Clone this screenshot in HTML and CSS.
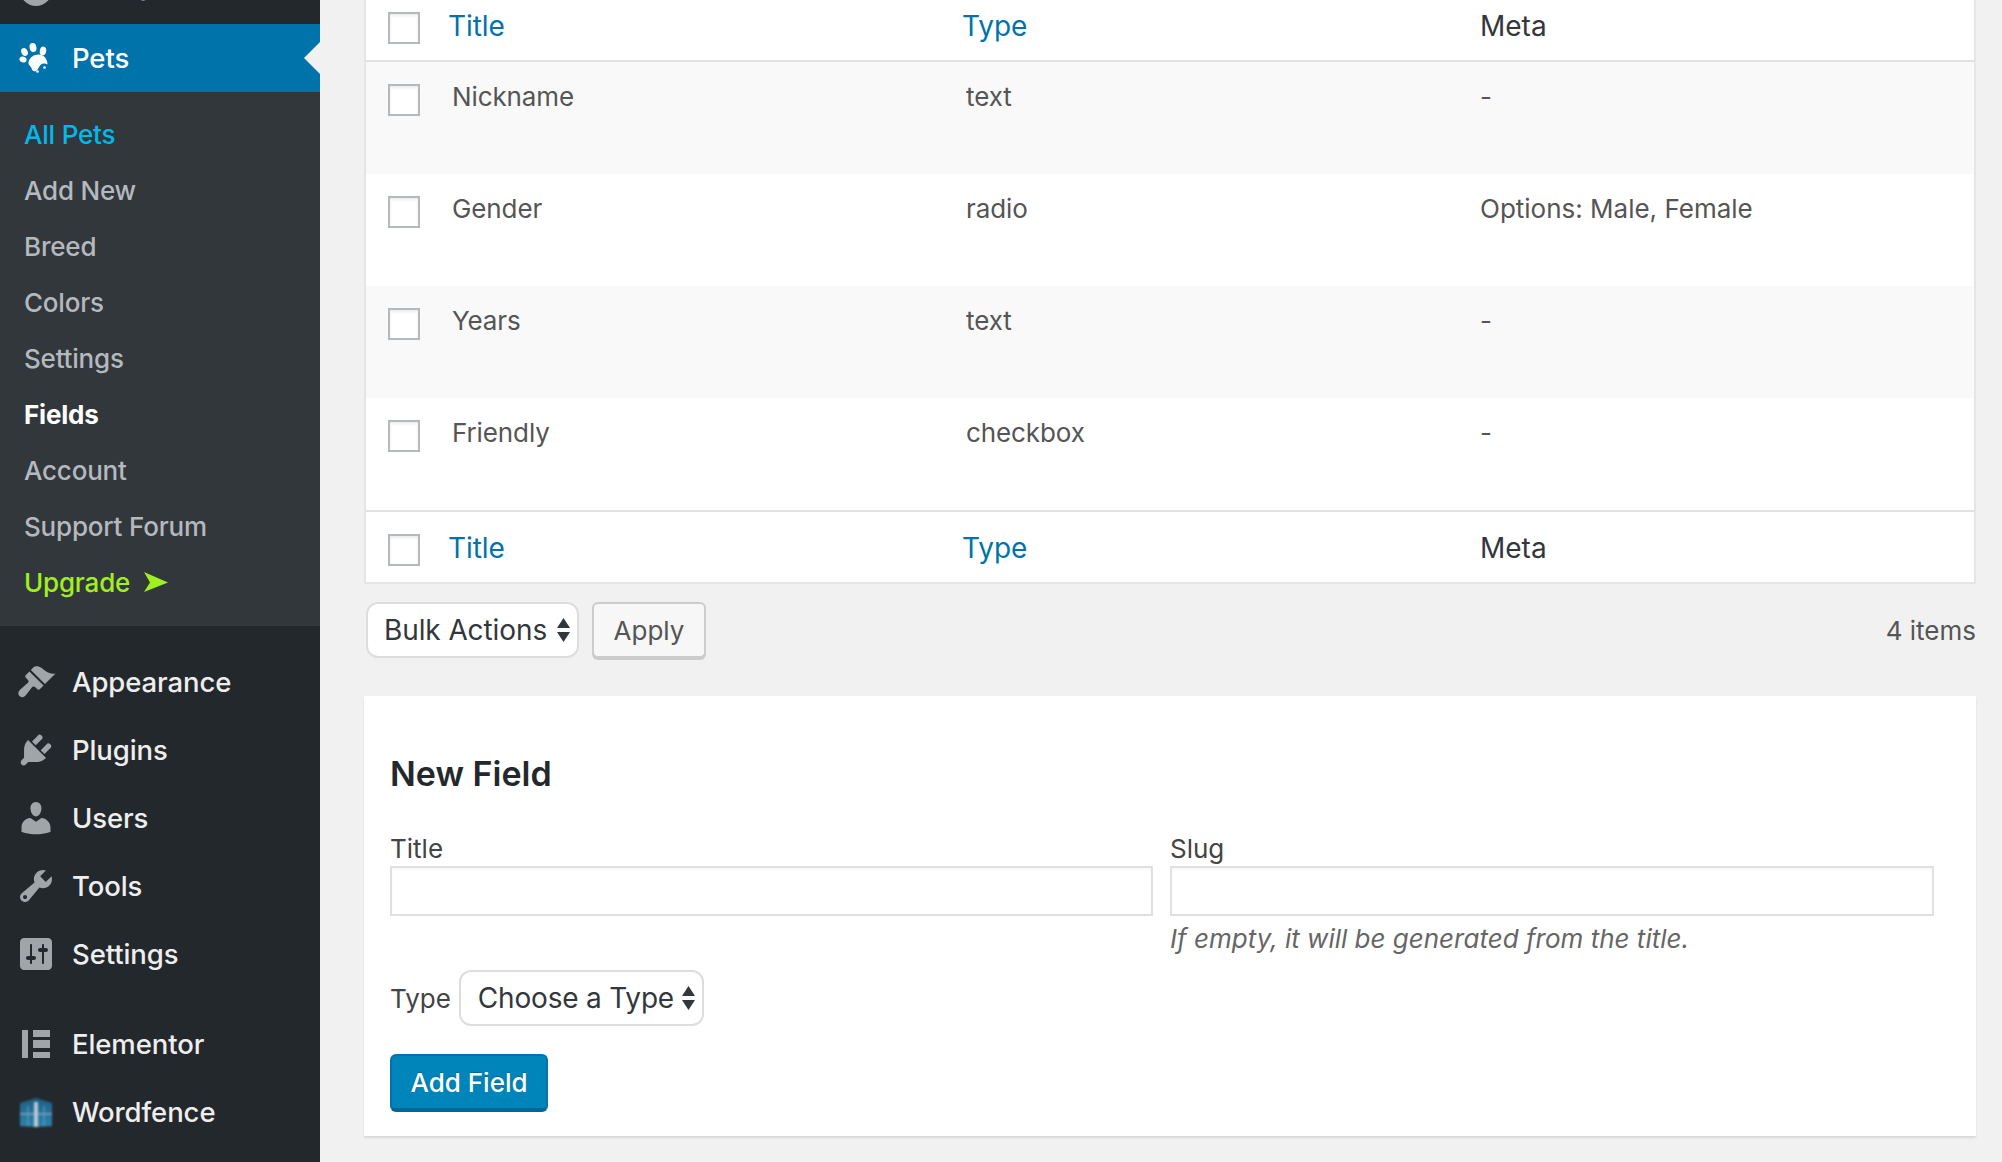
FILE: index.html
```html
<!DOCTYPE html>
<html lang="en">
<head>
<meta charset="utf-8">
<title>Pets - Fields</title>
<link rel="stylesheet" href="styles.css">
</head>
<body>
<aside class="sidebar">
  <nav class="menu">
    <a class="item cut"><svg class="ico" viewBox="0 0 20 20"><circle cx="10" cy="10" r="8"/></svg><span>Media</span></a>
    <a class="item current">
      <svg class="ico" viewBox="0 0 40 40"><ellipse cx="8.500" cy="14" rx="3.200" ry="4" transform="rotate(-25 8.500 14)"/><ellipse cx="17" cy="9.500" rx="3.400" ry="4.500" transform="rotate(-10 17 9.500)"/><ellipse cx="27" cy="13" rx="3.200" ry="4.400" transform="rotate(10 27 13)"/><ellipse cx="7" cy="21.500" rx="3.600" ry="2.900" transform="rotate(20 7 21.500)"/><path d="M12.500 24c1-4 5-7.500 10-7.500 5 0 9 4 9 10-2.500-1.500-5.500-1-7 .5-1.500 1.500-2 4-4.500 6-3 .8-4-1-4.500-3-.5-2-3.500-2.500-3-6z"/><circle cx="21.500" cy="33.500" r="1.300"/><circle cx="28.500" cy="29.500" r="1.300"/></svg>
      <span>Pets</span>
    </a>
    <ul class="sub">
      <li class="sub-item active">All Pets</li>
      <li class="sub-item">Add New</li>
      <li class="sub-item">Breed</li>
      <li class="sub-item">Colors</li>
      <li class="sub-item">Settings</li>
      <li class="sub-item strong">Fields</li>
      <li class="sub-item">Account</li>
      <li class="sub-item">Support Forum</li>
      <li class="sub-item upgrade">Upgrade <svg class="arrow" viewBox="0 0 24 20"><path d="M0 0l24 10.500L0 20l6-9.500z"/></svg></li>
    </ul>
    <a class="item"><svg class="ico" viewBox="0 0 20 20"><path d="M14.480 11.060L7.410 3.990l1.500-1.500c.5-.56 2.300-.47 3.510.32 1.210.8 1.430 1.280 2.910 2.100 1.180.64 2.450 1.260 4.450.85zm-.71.71L6.700 4.700 4.930 6.470c-.39.39-.39 1.020 0 1.410l1.060 1.060c.39.39.39 1.030 0 1.420L2 13.900c-1.100 1.100-1.100 2.300-.3 3.100.8.8 2.100.8 3.100-.3l3.310-4.220c.39-.39 1.030-.39 1.420 0l1.060 1.060c.39.39 1.020.39 1.410 0z"/></svg><span>Appearance</span></a>
    <a class="item"><svg class="ico" viewBox="0 0 20 20"><path d="M13.110 4.360L9.870 7.600 8 5.730l3.240-3.240c.35-.34 1.050-.2 1.560.32.52.51.66 1.210.31 1.550zm-8 1.770l.91-1.120 9.010 9.010-1.190.84c-.71.71-2.630 1.160-3.820 1.160H6.140L4.900 17.260c-.59.59-1.540.59-2.120 0-.59-.58-.59-1.530 0-2.120l1.240-1.240v-3.880c0-1.130.4-3.190 1.090-3.890zm7.260 3.970l3.240-3.240c.34-.35 1.040-.21 1.550.31.52.51.66 1.210.31 1.550l-3.240 3.250z"/></svg><span>Plugins</span></a>
    <a class="item"><svg class="ico" viewBox="0 0 20 20"><path d="M10 9.250c-2.270 0-2.730-3.440-2.730-3.440C7 4.020 7.820 2 9.970 2c2.160 0 2.980 2.020 2.710 3.810 0 0-.41 3.440-2.680 3.440zm0 2.570L12.720 10c2.390 0 4.520 2.330 4.520 4.530v2.490s-3.650 1.130-7.240 1.130c-3.650 0-7.240-1.130-7.240-1.130v-2.490c0-2.250 1.940-4.500 4.470-4.500z"/></svg><span>Users</span></a>
    <a class="item"><svg class="ico" viewBox="0 0 20 20"><path d="M16.680 9.770c-1.340 1.340-3.300 1.670-4.950.99l-5.410 6.520c-.99.99-2.590.99-3.580 0s-.99-2.590 0-3.570l6.520-5.420c-.68-1.650-.35-3.610.99-4.950 1.280-1.280 3.120-1.620 4.720-1.060l-2.890 2.890 2.820 2.820 2.860-2.870c.53 1.580.18 3.390-1.080 4.650zM3.810 16.210c.4.39 1.040.39 1.430 0 .4-.4.4-1.040 0-1.430-.39-.4-1.030-.4-1.430 0-.39.39-.39 1.030 0 1.430z"/></svg><span>Tools</span></a>
    <a class="item"><svg class="ico" viewBox="0 0 20 20"><path d="M18 16V4c0-1.100-.9-2-2-2H4c-1.100 0-2 .9-2 2v12c0 1.100.9 2 2 2h12c1.100 0 2-.9 2-2zM8 11h1c.55 0 1 .45 1 1s-.45 1-1 1H8v1.500c0 .28-.22.5-.5.5s-.5-.22-.5-.5V13H6c-.55 0-1-.45-1-1s.45-1 1-1h1V5.500c0-.28.22-.5.5-.5s.5.22.5.5V11zm5-2h-1c-.55 0-1-.45-1-1s.45-1 1-1h1V5.500c0-.28.22-.5.5-.5s.5.22.5.5V7h1c.55 0 1 .45 1 1s-.45 1-1 1h-1v5.500c0 .28-.22.5-.5.5s-.5-.22-.5-.5V9z"/></svg><span>Settings</span></a>
    <div class="sep"></div>
    <a class="item"><svg class="ico" viewBox="0 0 40 40"><rect x="6" y="6" width="6" height="28"/><rect x="17" y="6" width="17" height="7"/><rect x="17" y="16" width="17" height="8"/><rect x="17" y="28" width="17" height="6"/></svg><span>Elementor</span></a>
    <a class="item"><svg class="wf" viewBox="0 0 40 40"><defs><linearGradient id="wfg" x1="0" y1="0" x2="0" y2="1"><stop offset="0" stop-color="#1d5f85"/><stop offset="1" stop-color="#2f83ad"/></linearGradient></defs><path d="M4 11l16-5 16 5v23l-16 1-16-1z" fill="url(#wfg)"/><path d="M4 22h32" stroke="#7fb2cc" stroke-width="2" opacity=".7"/><path d="M12 14v20M28 14v20" stroke="#5f9fc0" stroke-width="2" opacity=".6"/><path d="M20 10v25" stroke="#b9c9d2" stroke-width="4"/></svg><span>Wordfence</span></a>
  </nav>
</aside>
<main class="main">
  <table class="fields">
    <colgroup><col class="c-cb"><col class="c-title"><col class="c-type"><col></colgroup>
    <thead>
      <tr><th class="cb"><input class="check" type="checkbox"></th><th><a class="link">Title</a></th><th><a class="link">Type</a></th><th>Meta</th></tr>
    </thead>
    <tbody>
      <tr class="alt"><td class="cb"><input class="check" type="checkbox"></td><td>Nickname</td><td>text</td><td class="meta">-</td></tr>
      <tr><td class="cb"><input class="check" type="checkbox"></td><td>Gender</td><td>radio</td><td class="meta">Options: Male, Female</td></tr>
      <tr class="alt"><td class="cb"><input class="check" type="checkbox"></td><td>Years</td><td>text</td><td class="meta">-</td></tr>
      <tr><td class="cb"><input class="check" type="checkbox"></td><td>Friendly</td><td>checkbox</td><td class="meta">-</td></tr>
    </tbody>
    <tfoot>
      <tr><th class="cb"><input class="check" type="checkbox"></th><th><a class="link">Title</a></th><th><a class="link">Type</a></th><th>Meta</th></tr>
    </tfoot>
  </table>
  <div class="tablenav">
    <span class="select-wrap bulk">
      <select class="select"><option>Bulk Actions</option></select>
      <svg class="updown" viewBox="0 0 13 24"><path d="M6.500 0L13 10H0zM0 14h13L6.500 24z"/></svg>
    </span>
    <button class="btn" type="button">Apply</button>
    <span class="count">4 items</span>
  </div>
  <section class="card">
    <h2 class="card-title">New Field</h2>
    <div class="cols">
      <div class="field">
        <label class="lab">Title</label>
        <input class="text" type="text">
      </div>
      <div class="field">
        <label class="lab">Slug</label>
        <input class="text" type="text">
        <p class="hint">If empty, it will be generated from the title.</p>
      </div>
    </div>
    <div class="type-row">
      <label class="lab">Type</label>
      <span class="select-wrap choose">
        <select class="select"><option>Choose a Type</option></select>
        <svg class="updown" viewBox="0 0 13 24"><path d="M6.500 0L13 10H0zM0 14h13L6.500 24z"/></svg>
      </span>
    </div>
    <button class="primary" type="button">Add Field</button>
  </section>
</main>
</body>
</html>
```
FILE: styles.css
```css
* { box-sizing: border-box; }
html, body { margin: 0; height: 100%; }
body {
  display: flex;
  overflow: hidden;
  background: #f1f1f1;
  font-family: Inter, "Liberation Sans", sans-serif;
  font-size: 26px;
  color: #555;
}

/* sidebar */
.sidebar { width: 320px; flex: none; background: #23282d; }
.menu { margin-top: -44px; }
.item {
  position: relative;
  display: flex;
  align-items: center;
  gap: 16px;
  height: 68px;
  padding-left: 16px;
  color: #eee;
  font-size: 27.500px;
  font-weight: 500;
  letter-spacing: -.1px;
}
.ico { width: 40px; height: 40px; flex: none; fill: #a0a5aa; }
.wf { width: 40px; height: 40px; flex: none; filter: blur(1px); }
.current { background: #0073aa; color: #fff; }
.current .ico { fill: #fff; }
.current::after {
  content: "";
  position: absolute;
  right: 0;
  top: 18px;
  border: 16px solid transparent;
  border-right-color: #f1f1f1;
  border-left-width: 0;
}
.sub { margin: 0 0 22px; padding: 14px 0 16px; list-style: none; background: #32373c; }
.sub-item {
  display: flex;
  align-items: center;
  gap: 14px;
  height: 56px;
  padding-left: 24px;
  color: #b4b9be;
  font-weight: 500;
  letter-spacing: -.2px;
}
.active { color: #00b9eb; }
.strong { color: #fff; font-weight: 700; }
.upgrade { color: #a0f01f; }
.arrow { width: 24px; height: 20px; fill: #a0f01f; }
.sep { height: 22px; }

/* main */
.main { flex: 1; min-width: 0; margin-top: -12px; padding: 0 26px 0 44px; }
.fields {
  width: 100%;
  table-layout: fixed;
  border-collapse: separate;
  border-spacing: 0;
  background: #fff;
  border: 2px solid #e5e5e5;
}
.c-cb { width: 66px; }
.c-title { width: 514px; }
.c-type { width: 518px; }
.fields th {
  padding: 2px 0 0 16px;
  text-align: left;
  font-weight: 400;
  font-size: 28px;
  color: #32373c;
  vertical-align: middle;
}
.fields thead th { border-bottom: 2px solid #e1e1e1; height: 72px; }
.fields tfoot th { border-top: 2px solid #e1e1e1; height: 72px; }
.fields td {
  height: 112px;
  padding: 14px 0 0 20px;
  vertical-align: top;
  line-height: 42px;
  letter-spacing: -.1px;
}
.fields td.meta { padding-left: 16px; letter-spacing: 0; }
.fields .cb { padding: 0 0 0 22px; }
.fields td.cb { padding-top: 22px; line-height: 0; }
.fields thead .cb, .fields tfoot .cb { vertical-align: top; padding-top: 22px; }
.alt { background: #f9f9f9; }
.link { color: #0073aa; letter-spacing: -.05px; }
.check {
  appearance: none;
  display: block;
  margin: 0;
  width: 32px;
  height: 32px;
  border: 2px solid #b4b9be;
  background: #fff;
  box-shadow: inset 0 2px 3px rgba(0,0,0,.08);
}

.tablenav { display: flex; align-items: flex-start; gap: 13px; margin-top: 18px; padding-left: 2px; }
.select-wrap { position: relative; display: block; }
.select {
  appearance: none;
  display: block;
  width: 100%;
  height: 100%;
  margin: 0;
  background: #fff;
  border: 2px solid #ddd;
  border-radius: 12px;
  font: inherit;
  font-size: 28px;
  letter-spacing: -.1px;
  color: #32373c;
}
.bulk { width: 213px; height: 56px; }
.bulk .select { padding: 0 0 0 16px; }
.choose { width: 245px; height: 56px; }
.choose .select { padding: 0 0 0 17px; letter-spacing: -.2px; }
.updown { position: absolute; right: 9px; top: 16px; width: 13px; height: 24px; fill: #32373c; }
.btn {
  height: 56px;
  width: 114px;
  padding: 0;
  background: #f7f7f7;
  border: 2px solid #ccc;
  border-radius: 6px;
  box-shadow: 0 2px 0 #ccc;
  font: inherit;
  font-size: 26px;
  color: #555;
}
.count { margin-left: auto; line-height: 58px; }

.card {
  margin-top: 36px;
  height: 440px;
  padding: 52px 42px 0 26px;
  background: #fff;
  box-shadow: 0 2px 2px rgba(0,0,0,.1);
}
.card-title { margin: 0 0 31px; font-size: 34px; line-height: 52px; font-weight: 600; color: #23282d; }
.cols { display: grid; grid-template-columns: 763px 764px; gap: 17px; }
.lab { display: block; line-height: 35px; color: #444; }
.text {
  display: block;
  width: 100%;
  height: 50px;
  margin: 0;
  border: 2px solid #e0e0e0;
  background: #fff;
  box-shadow: inset 0 2px 2px rgba(0,0,0,.03);
}
.hint { margin: 4px 0 0; line-height: 38px; font-style: italic; color: #666; }
.type-row { display: flex; align-items: center; gap: 8px; margin-top: 12px; }
.primary {
  display: block;
  margin-top: 28px;
  width: 158px;
  height: 58px;
  padding: 0;
  background: #0085ba;
  border: 2px solid #0073aa;
  border-bottom-color: #006799;
  border-bottom-width: 4px;
  border-radius: 6px;
  color: #fff;
  font: inherit;
  font-weight: 500;
  text-shadow: 0 -1px 1px #006799;
}
```
